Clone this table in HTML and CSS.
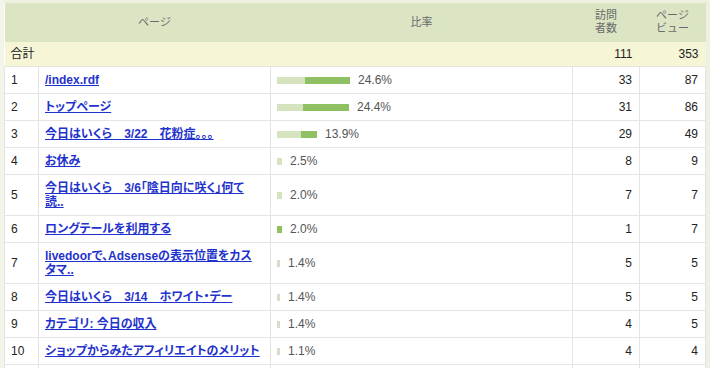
FILE: index.html
```html
<!DOCTYPE html>
<html lang="ja">
<head>
<meta charset="utf-8">
<title>ページ別アクセス</title>
<link rel="stylesheet" href="styles.css">
</head>
<body>
<div class="frame">
<table class="stats">
  <colgroup>
    <col class="c-no"><col class="c-page"><col class="c-rate"><col class="c-vis"><col class="c-pv">
  </colgroup>
  <thead>
    <tr class="head">
      <th></th>
      <th>ページ</th>
      <th>比率</th>
      <th>訪問<br>者数</th>
      <th>ページ<br>ビュー</th>
    </tr>
  </thead>
  <tbody>
    <tr class="total">
      <td colspan="2" class="label">合計</td>
      <td></td>
      <td class="num">111</td>
      <td class="num">353</td>
    </tr>
    <tr>
      <td class="no">1</td>
      <td class="page"><a href="#">/index.rdf</a></td>
      <td class="rate"><span class="bar"><span class="lt" style="width:28px"></span><span class="dk" style="width:45px"></span></span><span class="pct">24.6%</span></td>
      <td class="num">33</td><td class="num">87</td>
    </tr>
    <tr>
      <td class="no">2</td>
      <td class="page"><a href="#">トップページ</a></td>
      <td class="rate"><span class="bar"><span class="lt" style="width:26px"></span><span class="dk" style="width:46px"></span></span><span class="pct">24.4%</span></td>
      <td class="num">31</td><td class="num">86</td>
    </tr>
    <tr>
      <td class="no">3</td>
      <td class="page"><a href="#">今日はいくら　3/22　花粉症。。。</a></td>
      <td class="rate"><span class="bar"><span class="lt" style="width:24px"></span><span class="dk" style="width:16px"></span></span><span class="pct">13.9%</span></td>
      <td class="num">29</td><td class="num">49</td>
    </tr>
    <tr>
      <td class="no">4</td>
      <td class="page"><a href="#">お休み</a></td>
      <td class="rate"><span class="bar"><span class="lt" style="width:5px"></span></span><span class="pct">2.5%</span></td>
      <td class="num">8</td><td class="num">9</td>
    </tr>
    <tr>
      <td class="no">5</td>
      <td class="page"><a href="#">今日はいくら　3/6「陰日向に咲く」何て<br>読..</a></td>
      <td class="rate"><span class="bar"><span class="lt" style="width:5px"></span></span><span class="pct">2.0%</span></td>
      <td class="num">7</td><td class="num">7</td>
    </tr>
    <tr>
      <td class="no">6</td>
      <td class="page"><a href="#">ロングテールを利用する</a></td>
      <td class="rate"><span class="bar"><span class="dk" style="width:5px"></span></span><span class="pct">2.0%</span></td>
      <td class="num">1</td><td class="num">7</td>
    </tr>
    <tr>
      <td class="no">7</td>
      <td class="page"><a href="#">livedoorで、Adsenseの表示位置をカス<br>タマ..</a></td>
      <td class="rate"><span class="bar"><span class="gy" style="width:3px"></span></span><span class="pct">1.4%</span></td>
      <td class="num">5</td><td class="num">5</td>
    </tr>
    <tr>
      <td class="no">8</td>
      <td class="page"><a href="#">今日はいくら　3/14　ホワイト・デー</a></td>
      <td class="rate"><span class="bar"><span class="gy" style="width:3px"></span></span><span class="pct">1.4%</span></td>
      <td class="num">5</td><td class="num">5</td>
    </tr>
    <tr>
      <td class="no">9</td>
      <td class="page"><a href="#">カテゴリ: 今日の収入</a></td>
      <td class="rate"><span class="bar"><span class="gy" style="width:3px"></span></span><span class="pct">1.4%</span></td>
      <td class="num">4</td><td class="num">5</td>
    </tr>
    <tr>
      <td class="no">10</td>
      <td class="page"><a href="#">ショップからみたアフィリエイトのメリット</a></td>
      <td class="rate"><span class="bar"><span class="gy" style="width:3px"></span></span><span class="pct">1.1%</span></td>
      <td class="num">4</td><td class="num">4</td>
    </tr>
    <tr class="filler">
      <td class="no"></td><td class="page"></td><td class="rate"></td><td class="num"></td><td class="num"></td>
    </tr>
  </tbody>
</table>
</div>
</body>
</html>
```
FILE: styles.css
```css
html, body {
  margin: 0;
  padding: 0;
  background: #eef1e0;
}
body {
  font-family: "Liberation Sans", "Noto Sans CJK JP", sans-serif;
  font-size: 12px;
  color: #222;
}
.frame {
  padding: 3px 5px 0 4px;
  background: linear-gradient(to right, #f3f5e8 0, #f3f5e8 4px, #eef1e0 4px);
}
.stats {
  border-collapse: collapse;
  table-layout: fixed;
  width: 701px;
  background: #fff;
}
.c-no { width: 34px; }
.c-page { width: 232px; }
.c-rate { width: 302px; }
.c-vis { width: 67px; }
.c-pv { width: 66px; }

.stats td, .stats th {
  line-height: 14px;
  padding: 6px;
  vertical-align: middle;
  white-space: nowrap;
  overflow: hidden;
}
.stats td {
  border: 1px solid #e4e4e4;
}
.head th {
  background: #dbe5c4;
  color: #6a6a6a;
  font-size: 11px;
  line-height: 13px;
  font-weight: normal;
  text-align: center;
  height: 26px;
  border: none;
  padding: 6px 6px 7px 6px;
}
.total td {
  background: #f6f5d6;
  border: none;
  border-bottom: 1px solid #e4e4e4;
  padding: 5px 6px 5px 6px;
  color: #222;
}
.total td.label { text-align: left; }
.num {
  text-align: right;
  padding-right: 7px !important;
}
.no {
  color: #222;
}
.page a {
  color: #1f33cc;
  font-weight: bold;
  text-decoration: underline;
  font-feature-settings: "palt";
}
.rate {
  color: #555;
}
.bar {
  display: inline-flex;
  height: 7px;
}
.bar .lt { background: #d5e3be; height: 7px; }
.bar .dk { background: #8fc163; height: 7px; }
.bar .gy { background: #d9dcc9; height: 7px; }
.pct {
  margin-left: 8px;
}
.filler td {
  height: 14px;
}
```
